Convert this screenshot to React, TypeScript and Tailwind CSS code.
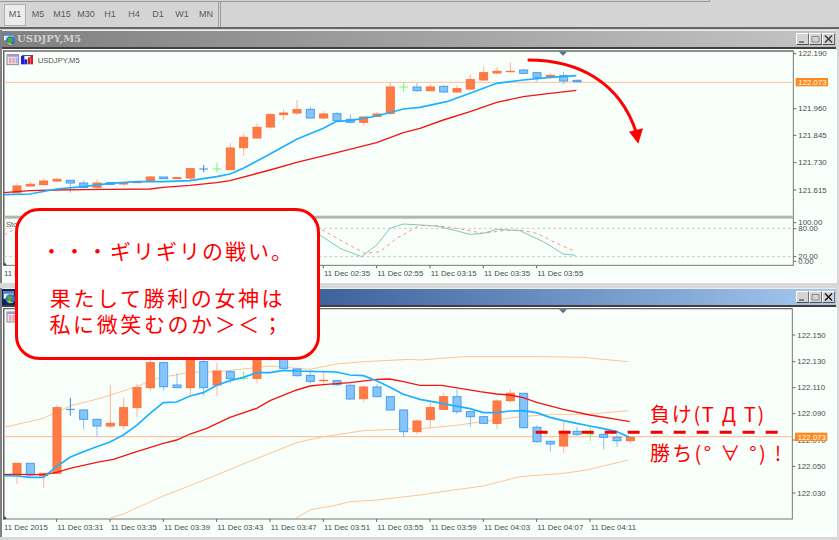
import type { ReactNode } from 'react';

const PLOT_BG = '#f8fffa';

type Bar = [number, number, number, number, string];
type Pt = [number, number];

// candles measured on a 3x grid: [body top, body bottom, wick top, wick bottom, kind]
const topBars: Bar[] = [
  [558, 578, 550, 580, 'o'], [553, 558, 545, 560, 'o'], [543, 554, 535, 555, 'o'], [538, 543, 532, 545, 'o'],
  [541, 549, 541, 578, 'b'], [549, 562, 541, 565, 'b'], [549, 562, 538, 565, 'o'], [548, 553, 546, 556, 'b'],
  [550, 552, 546, 558, 'o'], [545, 548, 543, 550, 'o'], [531, 544, 528, 545, 'o'], [531, 536, 531, 536, 'b'],
  [533, 536, 533, 536, 'o'], [506, 534, 503, 545, 'o'], [507, 507, 495, 517, 'x'], [507, 507, 488, 517, 'g'],
  [444, 509, 428, 510, 'o'], [412, 443, 400, 467, 'o'], [382, 414, 370, 416, 'o'], [344, 381, 338, 386, 'o'],
  [339, 344, 327, 360, 'o'], [329, 339, 300, 344, 'o'], [328, 354, 320, 356, 'b'], [342, 354, 333, 358, 'o'],
  [341, 362, 336, 365, 'b'], [358, 367, 343, 371, 'b'], [351, 367, 348, 377, 'o'], [342, 349, 336, 351, 'o'],
  [261, 340, 247, 345, 'o'], [261, 261, 248, 275, 'g'], [261, 272, 248, 276, 'b'], [261, 272, 252, 273, 'o'],
  [259, 276, 256, 278, 'b'], [266, 276, 255, 278, 'o'], [239, 267, 223, 272, 'o'], [218, 240, 200, 241, 'o'],
  [214, 219, 200, 222, 'o'], [214, 215, 187, 215, 'o'], [210, 220, 207, 223, 'b'], [218, 232, 216, 245, 'b'],
  [226, 232, 218, 237, 'o'], [227, 243, 216, 252, 'b'], [241, 245, 238, 249, 'b'],
];

const bottomBars: Bar[] = [
  [310, 345, 310, 373, 'o'], [310, 345, 310, 352, 'b'], [340, 347, 340, 383, 'o'], [143, 340, 135, 342, 'o'],
  [148, 148, 113, 167, 'x'], [150, 178, 148, 208, 'b'], [178, 198, 178, 230, 'b'], [190, 198, 75, 204, 'o'],
  [143, 197, 113, 208, 'o'], [83, 143, 72, 170, 'o'], [8, 83, 0, 92, 'o'], [8, 80, 5, 92, 'b'],
  [75, 83, 40, 85, 'b'], [0, 83, -30, 105, 'o'], [5, 83, 0, 108, 'b'], [33, 75, 8, 108, 'o'],
  [35, 56, 30, 70, 'b'], [55, 55, 33, 60, 'g'], [-20, 55, -30, 70, 'o'], [-25, -5, -30, 2, 'b'],
  [-10, 25, -30, 28, 'b'], [27, 47, 25, 50, 'b'], [46, 64, 35, 70, 'b'], [61, 61, 33, 70, 'o'],
  [62, 74, 60, 78, 'b'], [76, 117, 70, 120, 'b'], [81, 116, 76, 127, 'o'], [81, 110, 73, 112, 'b'],
  [110, 150, 108, 152, 'b'], [150, 215, 148, 232, 'b'], [183, 215, 178, 222, 'o'], [143, 178, 125, 205, 'o'],
  [110, 148, 98, 150, 'o'], [110, 155, 88, 162, 'b'], [155, 170, 152, 200, 'b'], [170, 190, 167, 192, 'b'],
  [123, 190, 118, 208, 'o'], [100, 122, 88, 128, 'o'], [100, 203, 100, 205, 'b'], [202, 245, 196, 248, 'b'],
  [244, 252, 242, 275, 'b'], [216, 258, 184, 278, 'o'], [214, 223, 202, 228, 'b'], [222, 222, 200, 243, 'g'],
  [223, 232, 222, 268, 'b'], [232, 242, 222, 260, 'b'], [232, 242, 230, 250, 'o'],
];

const R = 1260; // the measurements for the right half start here
const line = (left: Pt[], right: Pt[] = []) =>
  [...left, ...right.map(([x, y]) => [x + R, y] as Pt)].map((p) => p.join(',')).join(' ');

const topBlue = line(
  [[12, 584], [90, 582], [170, 567], [250, 560], [330, 550], [410, 545], [490, 545], [570, 542], [650, 530], [690, 522], [730, 505], [810, 462], [890, 418], [970, 385], [1010, 364], [1050, 362], [1130, 348], [1210, 327]],
  [[0, 322], [80, 305], [150, 280], [230, 250], [310, 240], [390, 232], [469, 227]],
);
const topRed = line(
  [[12, 578], [90, 572], [170, 570], [250, 569], [330, 568], [450, 567], [490, 562], [570, 556], [650, 548], [690, 542], [810, 510], [890, 487], [1010, 458], [1130, 428], [1210, 398]],
  [[0, 385], [70, 360], [150, 335], [230, 307], [310, 290], [390, 280], [469, 271]],
);
const stochTeal = line(
  [[960, 705], [1020, 745], [1085, 770], [1130, 735], [1170, 685], [1210, 672]],
  [[0, 675], [50, 678], [100, 690], [150, 703], [190, 700], [230, 688], [300, 692], [370, 725], [430, 762], [467, 766]],
);
const stochRed = line(
  [[12, 705], [50, 685], [960, 685], [1020, 720], [1095, 760], [1140, 755], [1190, 715]],
  [[0, 676], [60, 678], [110, 685], [190, 700], [250, 692], [300, 690], [350, 700], [410, 730], [467, 755]],
);
const botBlue = line(
  [[12, 347], [50, 348], [90, 352], [130, 352], [170, 320], [210, 292], [250, 275], [290, 260], [330, 246], [370, 225], [410, 196], [450, 160], [490, 128], [530, 126], [570, 108], [610, 98], [650, 76], [690, 62], [730, 52], [770, 38], [810, 38], [850, 31], [890, 33], [930, 34], [1010, 36], [1050, 45], [1090, 47], [1130, 62], [1170, 82], [1210, 103]],
  [[0, 118], [50, 127], [100, 137], [150, 146], [190, 158], [230, 158], [270, 153], [310, 152], [350, 158], [390, 172], [430, 182], [470, 190], [510, 198], [550, 206], [590, 215], [629, 232]],
);
const botRed = line(
  [[12, 343], [130, 344], [170, 337], [210, 325], [290, 307], [340, 298], [410, 275], [490, 250], [530, 240], [570, 222], [620, 205], [690, 172], [770, 145], [810, 122], [890, 90], [930, 78], [970, 74], [1050, 68], [1130, 58], [1170, 57], [1210, 65]],
  [[0, 76], [65, 76], [120, 85], [180, 95], [230, 102], [270, 105], [310, 113], [350, 127], [430, 148], [510, 165], [590, 178], [629, 185]],
);
const bollUp = line(
  [[12, 202], [130, 175], [210, 138], [300, 115], [410, 80], [470, 55], [570, 37], [650, 35], [730, 27], [810, 18], [930, 28], [1010, 12], [1090, 5], [1230, -2]],
  [[0, 0], [130, -10], [210, -10], [370, -10], [490, -8], [570, 0], [625, 5]],
);
const bollMid = line(
  [[325, 476], [370, 462], [490, 408], [600, 365], [730, 312], [890, 248], [970, 230], [1090, 212], [1210, 207]],
  [[0, 206], [100, 197], [190, 185], [300, 170], [400, 163], [500, 163], [560, 158], [625, 152]],
);
const bollLow = line(
  [[885, 476], [930, 450], [1010, 435], [1050, 425], [1130, 420]],
  [[0, 405], [100, 390], [190, 378], [300, 350], [430, 340], [500, 330], [625, 300]],
);

const Candles = ({ bars }: { bars: Bar[] }) => (
  <>
    {bars.map(([top, bot, wickTop, wickBot, kind], i) => {
      const x = 51 + i * 40;
      if (kind === 'x' || kind === 'g') {
        const c = kind === 'g' ? '#7cf07c' : '#3a84ea';
        return (
          <g key={i} stroke={c} strokeWidth="3">
            <line x1={x} x2={x} y1={wickTop} y2={wickBot} />
            <line x1={x - 13} x2={x + 13} y1={top} y2={top} />
          </g>
        );
      }
      const blue = kind === 'b';
      return (
        <g key={i}>
          <line x1={x} x2={x} y1={wickTop} y2={wickBot} stroke={blue ? '#8fbdf4' : '#ffb39c'} strokeWidth="3" />
          <rect
            x={x - 12}
            y={top}
            width="24"
            height={Math.max(bot - top, 1)}
            fill={blue ? '#86c5f9' : '#ff7c47'}
            stroke={blue ? '#4a9cf0' : '#ff7038'}
            strokeWidth="3"
          />
        </g>
      );
    })}
  </>
);

const AxisLabel = ({ x, y, children }: { x: number; y: number; children: string }) => (
  <text x={x} y={y + 8} fontSize="23.5" fontFamily="'Liberation Sans', sans-serif" fill="#4a4a4a">
    {children}
  </text>
);

const PriceAxis = ({ x, labels }: { x: number; labels: [string, number][] }) => (
  <>
    {labels.map(([label, y]) => (
      <g key={label}>
        <line x1={x} x2={x + 9} y1={y} y2={y} stroke="#666" strokeWidth="3" />
        <AxisLabel x={x + 15} y={y}>{label}</AxisLabel>
      </g>
    ))}
  </>
);

const TimeAxis = ({ y, labels }: { y: number; labels: string[] }) => (
  <>
    {labels.map((label, i) => {
      const x = 12 + i * 160;
      return (
        <g key={label}>
          {i > 0 && <line x1={x - 2} x2={x - 2} y1={y} y2={y + 9} stroke="#666" strokeWidth="3" />}
          <AxisLabel x={x} y={y + 24}>{label}</AxisLabel>
        </g>
      );
    })}
  </>
);

const PriceTag = ({ x, y }: { x: number; y: number }) => (
  <>
    <rect x={x} y={y - 13} width="97" height="25" fill="#ff8a1c" />
    <text x={x + 8} y={y + 8} fontSize="23.5" fontFamily="'Liberation Sans', sans-serif" fill="#fff">122.073</text>
  </>
);

const ChartIcons = ({ dy = 0 }: { dy?: number }) => (
  <g transform={`translate(0,${dy})`}>
    <rect x="21" y="164" width="35" height="30" fill="#e8e8f4" stroke="#8a8a9a" strokeWidth="3" />
    <rect x="21" y="164" width="35" height="6" fill="#9a9ad0" />
    <rect x="27" y="173" width="7" height="17" fill="#f0a0a8" />
    <rect x="37" y="173" width="7" height="17" fill="#f0a0a8" />
    <rect x="47" y="173" width="6" height="17" fill="#a8a8e8" />
    <rect x="63" y="168" width="10" height="25" fill="#2020d0" />
    <rect x="73" y="178" width="9" height="15" fill="#2020d0" />
    <rect x="84" y="172" width="6" height="21" fill="#c82020" />
    <rect x="91" y="165" width="8" height="28" fill="#c82020" />
    <rect x="66" y="165" width="30" height="3" fill="#5050a0" />
  </g>
);

const TopChart = () => (
  <svg width="834" height="233" viewBox="9 150 2502 699" className="block" style={{ background: PLOT_BG }}>
    {/* frame */}
    <line x1="10" x2="2380" y1="153" y2="153" stroke="#6a6a6a" strokeWidth="4" />
    <line x1="10.5" x2="10.5" y1="150" y2="798" stroke="#666" strokeWidth="6" />
    <line x1="2380" x2="2380" y1="152" y2="797" stroke="#777" strokeWidth="3" />
    <line x1="10" x2="2380" y1="796" y2="796" stroke="#777" strokeWidth="3" />
    <rect x="12" y="647" width="2368" height="9" fill="#b0b8b2" />
    <polygon points="1677,155 1701,155 1689,167" fill="#5c6c84" />
    <ChartIcons />
    <text x="113" y="188" fontSize="23" fontFamily="'Liberation Sans', sans-serif" fill="#555">USDJPY,M5</text>

    {/* price */}
    <line x1="12" x2="2380" y1="247" y2="247" stroke="#ffc09a" strokeWidth="3" />
    <Candles bars={topBars} />
    <polyline points={topRed} fill="none" stroke="#f21414" strokeWidth="4" />
    <polyline points={topBlue} fill="none" stroke="#1cb0ff" strokeWidth="5" />
    <PriceAxis x={2380} labels={[['122.190', 161], ['121.960', 326], ['121.845', 406], ['121.730', 488], ['121.615', 570]]} />
    <PriceTag x={2387} y={247} />

    {/* stochastic */}
    <line x1="12" x2="2380" y1="685" y2="685" stroke="#c8c8c8" strokeWidth="3" strokeDasharray="8 8" />
    <line x1="12" x2="2380" y1="770" y2="770" stroke="#c8c8c8" strokeWidth="3" strokeDasharray="8 8" />
    <text x="18" y="682" fontSize="23" fontFamily="'Liberation Sans', sans-serif" fill="#555">Stoch(5,3,3)</text>
    <polyline points={stochTeal} fill="none" stroke="#7cc8c0" strokeWidth="3" />
    <polyline points={stochRed} fill="none" stroke="#ff8f8f" strokeWidth="3" strokeDasharray="10 10" />
    <polygon points="14,786 20,796 12,796" fill="#1f3a7a" />
    <PriceAxis x={2380} labels={[['100.00', 668], ['80.00', 686], ['20.00', 770], ['0.00', 784]]} />
    <TimeAxis
      y={796}
      labels={['11 Dec 2015', '11 Dec 00:55', '11 Dec 01:15', '11 Dec 01:35', '11 Dec 01:55', '11 Dec 02:15', '11 Dec 02:35', '11 Dec 02:55', '11 Dec 03:15', '11 Dec 03:35', '11 Dec 03:55']}
    />

    {/* arrow */}
    <path d="M1583,180 C1740,180 1860,250 1908,395" fill="none" stroke="#ff0000" strokeWidth="9" />
    <polygon points="1887,395 1929,385 1915,431" fill="#ff0000" />
  </svg>
);

const BottomChart = () => (
  <svg width="834" height="229" viewBox="9 924 2502 687" className="block" style={{ background: PLOT_BG }}>
    <line x1="10" x2="2377" y1="926" y2="926" stroke="#6a6a6a" strokeWidth="4" />
    <line x1="10.5" x2="10.5" y1="924" y2="1560" stroke="#666" strokeWidth="6" />
    <line x1="2377" x2="2377" y1="925" y2="1558" stroke="#777" strokeWidth="3" />
    <line x1="10" x2="2377" y1="1557" y2="1557" stroke="#777" strokeWidth="3" />
    <polygon points="1677,928 1701,928 1689,940" fill="#5c6c84" />
    <ChartIcons dy={772} />

    <g transform="translate(0,1080)">
      <line x1="12" x2="2377" y1="230" y2="230" stroke="#ffb88c" strokeWidth="3" />
      <polyline points={bollUp} fill="none" stroke="#ffc494" strokeWidth="3" />
      <polyline points={bollMid} fill="none" stroke="#ffc494" strokeWidth="3" />
      <polyline points={bollLow} fill="none" stroke="#ffc494" strokeWidth="3" />
      <Candles bars={bottomBars} />
      <polyline points={botRed} fill="none" stroke="#f21414" strokeWidth="4" />
      <polyline points={botBlue} fill="none" stroke="#1cb0ff" strokeWidth="5" />
      <polygon points="14,467 20,477 12,477" fill="#1f3a7a" />
      <line x1="1607" x2="2335" y1="217" y2="217" stroke="#f00000" strokeWidth="9" strokeDasharray="36 33" />
    </g>

    <PriceAxis
      x={2377}
      labels={[['122.150', 1005], ['122.130', 1085], ['122.110', 1163], ['122.090', 1241], ['122.070', 1320], ['122.050', 1399], ['122.030', 1479]]}
    />
    <PriceTag x={2385} y={1311} />
    <TimeAxis
      y={1557}
      labels={['11 Dec 2015', '11 Dec 03:31', '11 Dec 03:35', '11 Dec 03:39', '11 Dec 03:43', '11 Dec 03:47', '11 Dec 03:51', '11 Dec 03:55', '11 Dec 03:59', '11 Dec 04:03', '11 Dec 04:07', '11 Dec 04:11']}
    />
  </svg>
);

const AppIcon = () => (
  <svg width="13" height="13" viewBox="0 0 14 14" className="shrink-0">
    <rect x="0.5" y="0.5" width="11" height="8" fill="#e8eef8" stroke="#6a7a90" />
    <rect x="1" y="1" width="10" height="2" fill="#5a80c0" />
    <circle cx="8" cy="8.5" r="5" fill="#2a78c8" />
    <path d="M5 5.5 L9 5 L11 8 L8 10 L9 13 L6 12 L5 9 Z" fill="#4aa83a" />
    <path d="M3 10 L7 13 L11 13 L8 11 Z" fill="#e8b820" />
  </svg>
);

const WinButton = ({ kind, active }: { kind: 'min' | 'max' | 'close'; active: boolean }) => (
  <div className="w-[13px] h-[12px] bg-[#d4d4d4] border-t border-l border-t-white border-l-white border-r border-b border-r-[#707070] border-b-[#505050] flex items-center justify-center">
    <svg width="9" height="8" viewBox="0 0 9 8">
      {kind === 'min' && <rect x="1" y="6" width="5" height="2" fill="#808080" />}
      {kind === 'max' && <path d="M1 1.5 H8 V7 H1 Z" fill="none" stroke="#8a8a8a" strokeWidth="1" />}
      {kind === 'close' && <path d="M1 0.5 L8 7.5 M8 0.5 L1 7.5" stroke={active ? '#111' : '#333'} strokeWidth="1.4" />}
    </svg>
  </div>
);

const TitleBar = ({ title, active }: { title: string; active: boolean }) => (
  <div
    className={`h-[16px] flex items-center justify-between pl-px pr-px ${
      active ? 'bg-linear-to-r from-[#0a246a] to-[#a6caf0]' : 'bg-linear-to-r from-[#808080] to-[#c4c4c4]'
    }`}
  >
    <div className="flex items-center gap-px">
      <AppIcon />
      <span className="text-[10px] leading-none font-bold text-[#d0d0d0] font-['DejaVu_Serif',serif]">{title}</span>
    </div>
    <div className="flex items-center">
      <WinButton kind="min" active={active} />
      <WinButton kind="max" active={active} />
      <WinButton kind="close" active={active} />
    </div>
  </div>
);

const ChartWindow = ({ title, active, children }: { title: string; active: boolean; children: ReactNode }) => (
  <div className="border-l-2 border-[#808080] bg-[#d8d8d8] pr-[3px]">
    <div className="h-px bg-[#ececec]" />
    <TitleBar title={title} active={active} />
    <div className="h-[2px] bg-[#404040]" />
    <div className="h-px bg-white" />
    <div className="bg-white pl-px">{children}</div>
  </div>
);

const frames = ['M5', 'M15', 'M30', 'H1', 'H4', 'D1', 'W1', 'MN'];

const Toolbar = () => (
  <div className="h-[30px] shrink-0 bg-[#d4d4d4]">
    <div className="h-[2px] w-[710px] border-b border-r border-[#9a9a9a]" />
    <div className="h-[25px] flex border-b-2 border-[#666] font-['Liberation_Sans',sans-serif] text-[9px] text-[#5c5c5c] box-content">
      <div className="w-[219px] flex items-center border-r border-[#a0a0a0] pl-[4px]">
        <div className="w-[22px] h-[22px] bg-[#ececec] border border-[#b0b0b0] flex items-center justify-center">M1</div>
        {frames.map((f) => (
          <div key={f} className="w-[24px] text-center">{f}</div>
        ))}
      </div>
      <div className="ml-px w-px bg-[#999]" />
    </div>
  </div>
);

export default function App() {
  return (
    <div className="relative w-[839px] h-[540px] overflow-hidden bg-[#d8d8d8] flex flex-col">
      <Toolbar />
      <ChartWindow title="USDJPY,M5" active={false}>
        <TopChart />
      </ChartWindow>
      <div className="h-[5px] shrink-0 bg-[#d8d8d8]" />
      <ChartWindow title="USDJPY,M1" active>
        <BottomChart />
      </ChartWindow>

      {/* speech box over the charts */}
      <div className="absolute left-[15px] top-[208px] w-[305px] h-[152px] bg-white border-[3px] border-[#ff0000] rounded-[24px] flex flex-col items-center pt-[26px] text-[#ff0000] text-[21px] leading-[26px] tracking-[2px] font-['Noto_Sans_CJK_JP',sans-serif]">
        <div>・・・ギリギリの戦い。</div>
        <div className="h-[21px]" />
        <div className="tracking-[2.6px]">果たして勝利の女神は</div>
        <div className="tracking-[2.6px]">私に微笑むのか＞＜；</div>
      </div>

      <div className="absolute left-[650px] top-[401px] text-[#ff0000] text-[20px] leading-[26px] tracking-[1.7px] whitespace-pre font-['Noto_Sans_CJK_JP',sans-serif]">
        負け(T Д T)
      </div>
      <div className="absolute left-[650px] top-[440px] text-[#ff0000] text-[20px] leading-[26px] tracking-[2.3px] whitespace-pre font-['Noto_Sans_CJK_JP',sans-serif]">
        勝ち(° ∀ °) !
      </div>
    </div>
  );
}
